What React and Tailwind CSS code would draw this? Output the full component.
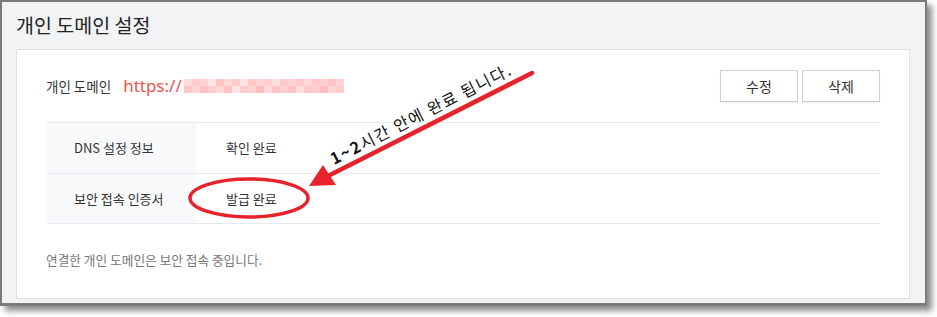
import React from "react";

const font = { fontFamily: '"Noto Sans CJK KR", "Noto Sans", sans-serif' };

// pixelated blur that hides the domain
const blurTop = ["bg-[#ffdcdc]", "bg-[#ffcaca]", "bg-[#ffd2d2]", "bg-[#ffe6e6]", "bg-[#ffc4c4]", "bg-[#ffd6d6]", "bg-[#ffcccc]", "bg-[#ffe4e4]", "bg-[#ffc6c6]", "bg-[#ffd5d5]", "bg-[#ffcece]", "bg-[#ffdfdf]", "bg-[#ffc8c8]", "bg-[#ffd2d2]", "bg-[#ffc9c9]", "bg-[#ffd9d9]", "bg-[#ffc7c7]", "bg-[#ffcfcf]", "bg-[#ffc2c2]", "bg-[#ffd4d4]"];
const blurBottom = ["bg-[#ffc6c6]", "bg-[#ffd4d4]", "bg-[#ffc0c0]", "bg-[#ffcfcf]", "bg-[#ffd8d8]", "bg-[#ffc3c3]", "bg-[#ffe6e6]", "bg-[#ffcaca]", "bg-[#ffd1d1]", "bg-[#ffbfbf]", "bg-[#ffdbdb]", "bg-[#ffc4c4]", "bg-[#ffd0d0]", "bg-[#ffc1c1]", "bg-[#ffdddd]", "bg-[#ffc8c8]", "bg-[#ffcdcd]", "bg-[#ffbebe]", "bg-[#ffd6d6]", "bg-[#ffcbcb]"];

function Button({ children }) {
  return (
    <button className="w-[78px] h-[32px] border border-[#c9cfd7] bg-white text-[14px] text-[#333] shadow-[0_1px_1px_rgba(0,0,0,0.06)]">
      {children}
    </button>
  );
}

function Row({ label, value, last }) {
  return (
    <div className={"flex h-[51px] border-t border-[#e7e9ec] " + (last ? "border-b" : "")}>
      <div className="w-[150px] bg-[#f8f9fb] flex items-center pl-[28px] text-[13px] text-[#333]">{label}</div>
      <div className="flex items-center pl-[30px] text-[13px] text-[#333]">{value}</div>
    </div>
  );
}

export default function App() {
  return (
    <div className="relative w-[937px] h-[317px] bg-white overflow-hidden" style={font}>
      <div className="w-[927px] h-[306px] border-2 border-b-[3px] border-[#7b7b7b] bg-[#f2f3f5] shadow-[5px_5px_6px_rgba(0,0,0,0.45)] pl-[14px] pr-[15px]">
        <h1 className="h-[47px] pt-[9px] text-[19.5px] leading-[28px] text-[#222]">개인 도메인 설정</h1>

        <div className="h-[250px] bg-white border border-[#dde2e9] px-[29px] pt-[20px]">
          <div className="flex items-center justify-between h-[32px]">
            <div className="flex items-center">
              <span className="text-[13.5px] text-[#333] mr-[12px]">개인 도메인</span>
              <span className="text-[17px] text-[#f5524b]" style={{ fontFamily: '"Noto Sans", sans-serif' }}>https://</span>
              <div className="flex flex-col ml-[2px]">
                <div className="flex">
                  {blurTop.map((c, i) => (
                    <div key={i} className={"w-[8px] h-[7px] " + c} />
                  ))}
                </div>
                <div className="flex">
                  {blurBottom.map((c, i) => (
                    <div key={i} className={"w-[8px] h-[7px] " + c} />
                  ))}
                </div>
              </div>
            </div>
            <div className="flex gap-[4px]">
              <Button>수정</Button>
              <Button>삭제</Button>
            </div>
          </div>

          <div className="mt-[20px]">
            <Row label="DNS 설정 정보" value="확인 완료" />
            <Row label="보안 접속 인증서" value="발급 완료" last />
          </div>

          <p className="mt-[26px] text-[12.7px] text-[#777]">연결한 개인 도메인은 보안 접속 중입니다.</p>
        </div>
      </div>

      {/* annotation */}
      <svg className="absolute inset-0" width="937" height="317" viewBox="0 0 937 317">
        <ellipse cx="249" cy="198" rx="59" ry="19" fill="none" stroke="#e8222a" strokeWidth="3.5" />
        <line x1="532" y1="73" x2="326" y2="177" stroke="#e8222a" strokeWidth="4.5" strokeLinecap="round" />
        <polygon points="309,186 323,165 336,185" fill="#e8222a" />
        <text
          x="334"
          y="165"
          transform="rotate(-27 334 165)"
          fontSize="16"
          letterSpacing="1.6"
          fill="#111"
          style={font}
        >
          <tspan fontWeight="bold">1~2</tspan>시간 안에 완료 됩니다.
        </text>
      </svg>
    </div>
  );
}
